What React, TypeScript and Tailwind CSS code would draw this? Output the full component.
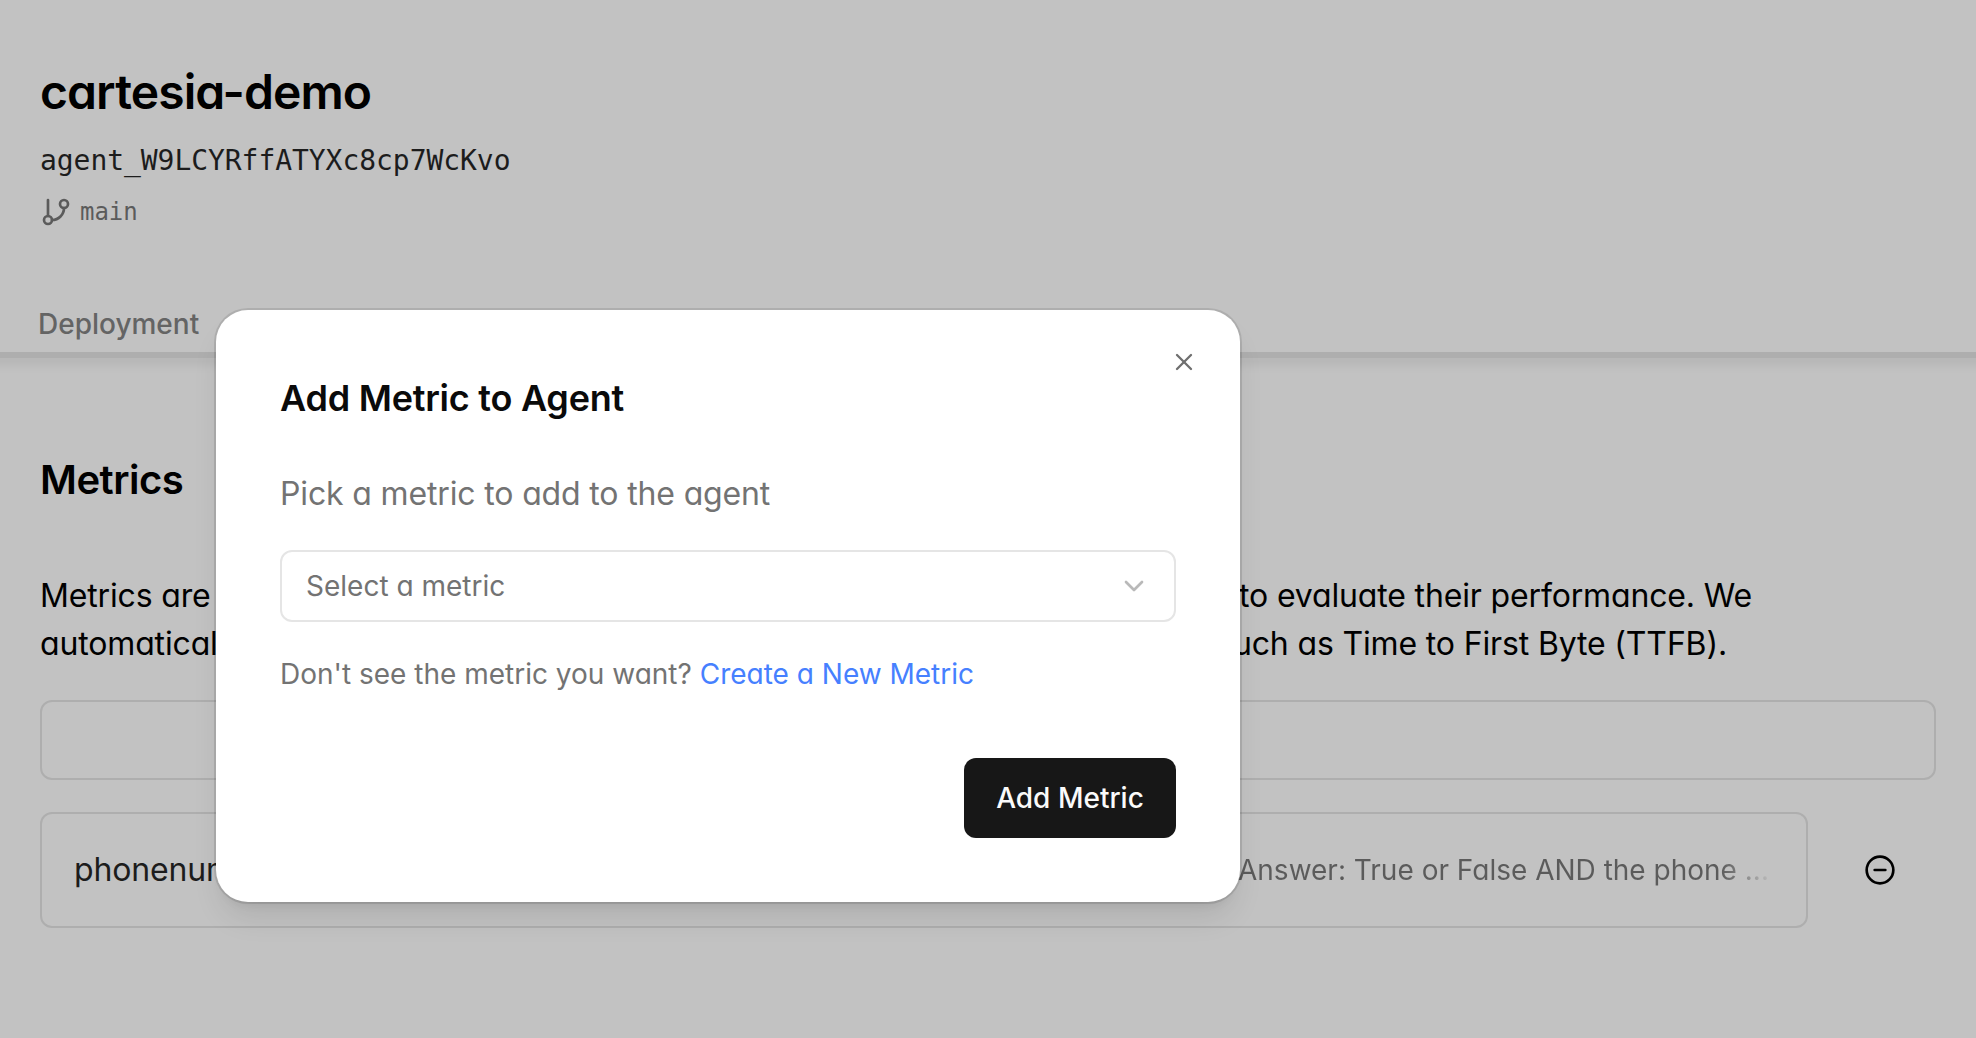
import React from "react";
import { ChevronDown, CircleMinus, GitBranch, X } from "lucide-react";

function AgentHeader() {
  return (
    <header className="h-[352px] pl-10">
      <div className="flex h-full flex-col items-start">
        <h1 className="mt-[60px] text-[48px] leading-[64px] font-semibold tracking-[-0.9px] text-black whitespace-nowrap">
          cartesia-demo
        </h1>
        <div className="mt-[17px] font-['DejaVu_Sans_Mono',monospace] text-[28px] leading-[40px] tracking-[-0.056px] text-[#1c1c1c]">
          agent_W9LCYRffATYXc8cp7WcKvo
        </div>
        <div className="mt-[15px] flex h-8 items-center gap-2 text-[#5b5b5b]">
          <GitBranch size={32} strokeWidth={2} />
          <span className="font-['DejaVu_Sans_Mono',monospace] text-[24px] leading-8 tracking-[-0.05px]">main</span>
        </div>
        <div className="mt-[76px] -ml-0.5 text-[28px] leading-10 font-medium text-[#646464]">Deployment</div>
      </div>
    </header>
  );
}

function MetricsSection() {
  return (
    <main className="px-10">
      <h2 className="pt-[102px] text-[40px] leading-[40px] font-semibold tracking-[-0.5px]">Metrics</h2>
      <div className="mt-[72px] text-[32px] leading-[48px] tracking-[-0.15px] text-black">
        <div className="flex w-[1712px] justify-between">
          <span>Metrics are</span>
          <span>to evaluate their performance. We</span>
        </div>
        <div className="flex w-[1687px] justify-between">
          <span>automatically</span>
          <span>such as Time to First Byte (TTFB).</span>
        </div>
      </div>
      <div className="mt-8 h-20 rounded-xl border-2 border-[#aeaeae]" />
      <div className="mt-8 flex items-center">
        <div className="flex h-[116px] w-[1768px] items-center justify-between rounded-xl border-2 border-[#aeaeae] px-8">
          <span className="text-[32px] leading-[48px] tracking-[-0.15px] text-[#1c1c1c]">phonenumber</span>
          <span className="bg-[linear-gradient(to_right,#5b5b5b_90%,#c2c2c2_100%)] bg-clip-text pr-[5px] text-[28px] leading-10 text-transparent">
            Answer: True or False AND the phone ...
          </span>
        </div>
        <div className="ml-14 text-black">
          <CircleMinus size={32} strokeWidth={2} />
        </div>
      </div>
    </main>
  );
}

function AddMetricDialog() {
  return (
    <div
      role="dialog"
      className="absolute top-[310px] left-[216px] flex h-[592px] w-[1024px] flex-col rounded-[32px] bg-white px-16 shadow-[0_0_0_2px_rgba(0,0,0,0.1),0_20px_30px_-6px_rgba(0,0,0,0.1),0_8px_12px_-8px_rgba(0,0,0,0.1)]"
    >
      <button className="absolute top-[38px] right-[42px] text-[#6f6f6f]">
        <X size={28} strokeWidth={2} />
      </button>
      <h3 className="mt-[64px] text-[36px] leading-[48px] font-semibold tracking-[-0.24px] text-[#0a0a0a]">
        Add Metric to Agent
      </h3>
      <p className="mt-[48px] text-[32px] leading-[48px] tracking-[-0.15px] text-[#737373]">
        Pick a metric to add to the agent
      </p>
      <div className="mt-[32px] flex h-[72px] items-center justify-between rounded-xl border-2 border-[#e5e5e5] px-6 text-[28px] leading-10 text-[#737373]">
        <span>Select a metric</span>
        <ChevronDown size={32} strokeWidth={2} className="text-[#b9b9b9]" />
      </div>
      <p className="mt-[32px] text-[28px] leading-10 text-[#737373]">
        Don't see the metric you want? <a className="text-[#4680ff]">Create a New Metric</a>
      </p>
      <button className="mt-[64px] h-20 w-[212px] self-end rounded-xl bg-[#171717] text-[28px] leading-10 font-medium text-[#fafafa]">
        Add Metric
      </button>
    </div>
  );
}

export default function App() {
  return (
    <div className="relative h-[1038px] w-[1976px] overflow-hidden bg-[#c2c2c2] font-['Inter',sans-serif] [font-feature-settings:'cv11'_1]">
      <AgentHeader />
      <div className="relative h-1.5">
        <div className="-mx-5 h-full bg-[#aeaeae] shadow-[0_4px_12px_rgba(0,0,0,0.13)] [clip-path:inset(0_0_-24px_0)]" />
      </div>
      <MetricsSection />
      <AddMetricDialog />
    </div>
  );
}
